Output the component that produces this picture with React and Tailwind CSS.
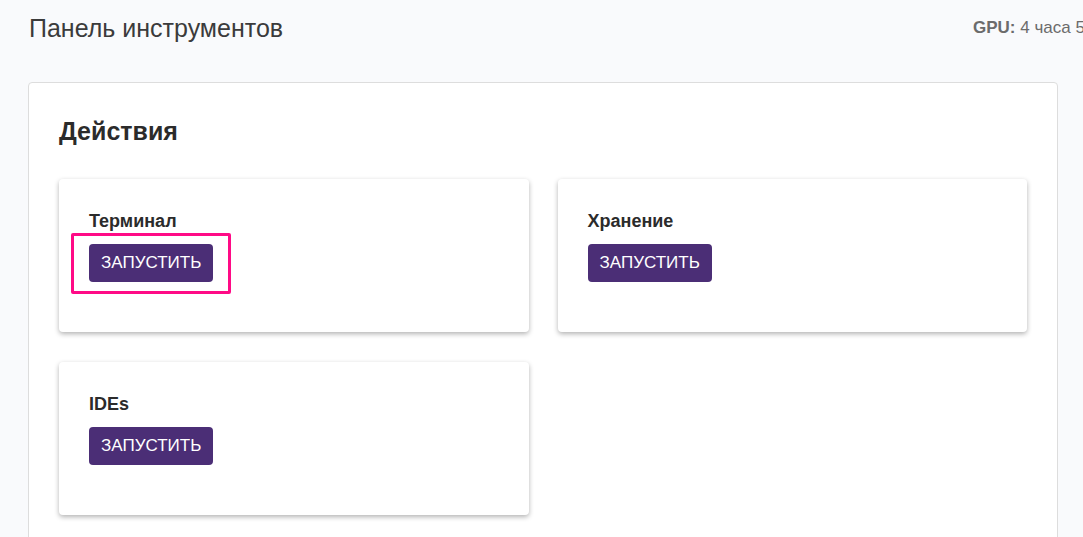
const actions = [
  { name: 'Терминал', highlighted: true },
  { name: 'Хранение' },
  { name: 'IDEs' },
];

const ActionCard = ({ name, highlighted }) => (
  <div className="bg-white rounded shadow-[0_2px_5px_rgba(0,0,0,0.3)] h-[153px] pt-[30px] px-[30px]">
    <h3 className="text-[18px] leading-[24px] font-bold text-[#2b2b2b]">{name}</h3>
    <div className="relative mt-[11px] w-fit">
      <button className="bg-[#4b2e76] text-white text-[17px] leading-[24px] px-3 py-[7px] rounded">
        ЗАПУСТИТЬ
      </button>
      {highlighted && (
        <div className="absolute -left-[18px] -right-[18px] -top-[11px] -bottom-[12px] border-[3px] border-[#ff0a86] rounded-[2px] pointer-events-none" />
      )}
    </div>
  </div>
);

export default function App() {
  return (
    <div className="w-[1083px] h-[537px] overflow-hidden bg-[#f9fafc] font-['Liberation_Sans',Arial,sans-serif]">
      {/* Header */}
      <div className="flex items-center pl-[29px] pt-[9px] h-[46px]">
        <h1 className="w-[944px] shrink-0 text-[25px] leading-[30px] text-[#3b3b3b]">Панель инструментов</h1>
        <div className="whitespace-nowrap text-[17px] text-[#6b6b6b]">
          <span className="font-bold">GPU:</span> 4 часа 5
        </div>
      </div>

      {/* Actions panel */}
      <div className="ml-[28px] mt-[36px] w-[1030px] bg-white border border-[#dddddd] rounded px-[30px] pt-[32px] pb-[40px]">
        <h2 className="text-[25px] leading-[32px] font-bold text-[#2b2b2b]">Действия</h2>
        <div className="grid grid-cols-2 gap-x-[29px] gap-y-[30px] mt-[32px]">
          {actions.map((a) => (
            <ActionCard key={a.name} {...a} />
          ))}
        </div>
      </div>
    </div>
  );
}
